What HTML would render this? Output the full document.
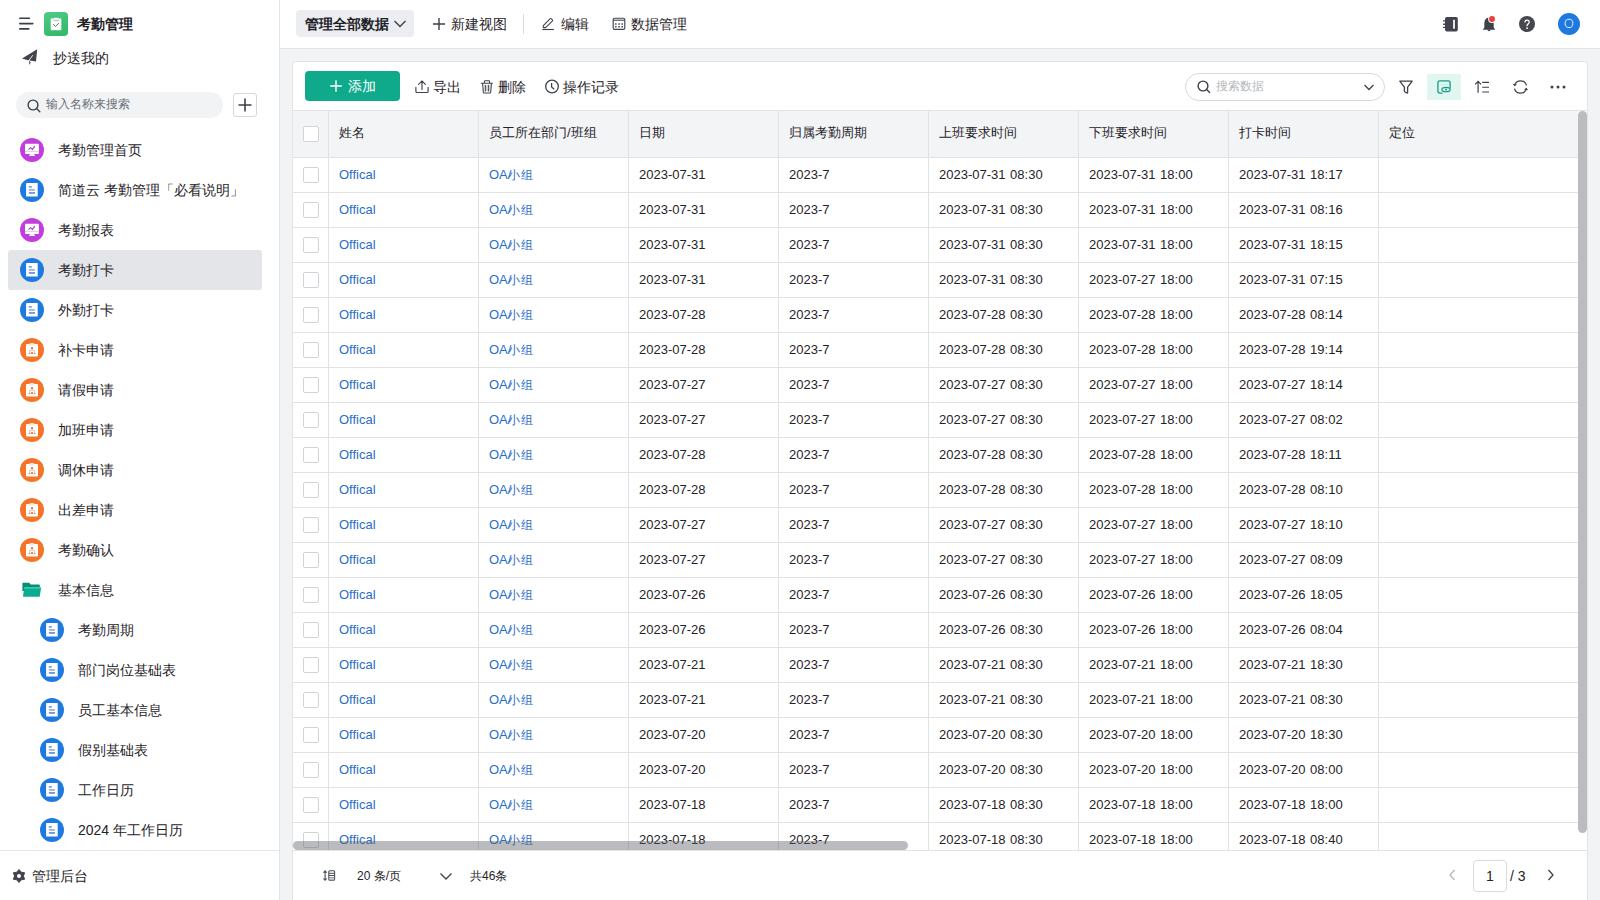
<!DOCTYPE html>
<html><head><meta charset="utf-8">
<style>
html,body{margin:0;padding:0}
body{width:1600px;height:900px;overflow:hidden;position:relative;background:#f2f3f5;font-family:"Liberation Sans",sans-serif;color:#1f2329;font-size:14px}
.a{position:absolute}
svg{display:block}
#side{position:absolute;left:0;top:0;width:279px;height:900px;background:#fff;border-right:1px solid #e3e4e6}
.t14{position:absolute;font-size:14px;line-height:20px;white-space:nowrap;color:#1f2329}
.nv{position:absolute;left:0;width:279px;height:40px}
.nvi{position:absolute;top:8px}
.nvt{position:absolute;top:10px;font-size:14px;line-height:20px;white-space:nowrap;color:#1f2329}
#hdr{position:absolute;left:280px;top:0;width:1320px;height:48px;background:#fff;border-bottom:1px solid #e3e4e6}
#card{position:absolute;left:292px;top:61px;width:1294px;height:850px;background:#fff;border:1px solid #e3e4e6;border-radius:4px}
.th{position:absolute;top:123px;font-size:13px;line-height:20px;white-space:nowrap;color:#1f2329}
.vl{position:absolute;top:111px;width:1px;height:739px;background:#e1e2e4}
.tr{position:absolute;left:293px;width:1285px;height:35px}
.hl{position:absolute;left:0;bottom:0;width:1285px;height:1px;background:#e1e2e4}
.cb{position:absolute;left:10px;width:14px;height:14px;border:1px solid #d0d3d7;border-radius:2px;background:#fff}
.td{position:absolute;top:7px;font-size:13px;line-height:20px;white-space:nowrap;color:#1f2329;word-spacing:1px}
.lk{color:#2a6dc8}
</style></head>
<body>
<div id="side">
  <!-- hamburger -->
  <svg class="a" style="left:18px;top:16px" width="16" height="16" viewBox="0 0 16 16"><path d="M1.8 2.3h9.6M1.8 7.6h13M1.8 12.9h9" stroke="#3b3f46" stroke-width="1.6" stroke-linecap="round"/></svg>
  <!-- app icon -->
  <div class="a" style="left:44px;top:12px;width:24px;height:24px;border-radius:4px;background:linear-gradient(160deg,#52c987,#2db866)"></div>
  <svg class="a" style="left:44px;top:12px" width="24" height="24" viewBox="0 0 24 24"><path d="M6.7 6.6h2.6v1.2q0 .8.8.8h3.8q.8 0 .8-.8V6.6h2.6v11.6H6.7z" fill="#fff"/><rect x="9.4" y="5.8" width="5.4" height="2.4" rx=".6" fill="#fff"/><path d="M9.6 8.3h5" stroke="#8fbfa2" stroke-width=".7"/><path d="M9.2 12.2l2.3 2.3 3.4-3.4" fill="none" stroke="#557a66" stroke-width="1"/></svg>
  <div class="t14" style="left:77px;top:14px;font-weight:bold">考勤管理</div>
  <!-- plane -->
  <svg class="a" style="left:16px;top:44px" width="28" height="26" viewBox="0 0 28 26"><path d="M21.2 5.2L6 14.4l5.2 1.5 2.2.7 6.6.9z" fill="#41444c"/><path d="M16.8 11.2l-4.6 6.2" stroke="#fff" stroke-width=".9"/><path d="M13.1 16.9l1.7 1.4-1.5 2.6z" fill="#41444c"/></svg>
  <div class="t14" style="left:53px;top:48px">抄送我的</div>
  <!-- search -->
  <div class="a" style="left:16px;top:92px;width:207px;height:26px;border-radius:13px;background:#f2f3f5"></div>
  <svg class="a" style="left:27px;top:99px" width="14" height="14" viewBox="0 0 14 14"><circle cx="6" cy="6" r="4.9" fill="none" stroke="#3d4148" stroke-width="1.4"/><path d="M9.6 9.6l3.2 3.2" stroke="#3d4148" stroke-width="1.4" stroke-linecap="round"/></svg>
  <div class="a" style="left:46px;top:96px;font-size:12px;line-height:17px;color:#6a6f77;white-space:nowrap">输入名称来搜索</div>
  <div class="a" style="left:233px;top:93px;width:22px;height:22px;border:1px solid #d5d7da;border-radius:3px;background:#fff"></div>
  <svg class="a" style="left:233px;top:93px" width="24" height="24" viewBox="0 0 24 24"><path d="M12 5.5v13M5.5 12h13" stroke="#3d4148" stroke-width="1.6"/></svg>
  <!-- selected -->
  <div class="a" style="left:8px;top:250px;width:254px;height:40px;border-radius:3px;background:#e3e5e8"></div>
<div class="nv" style="top:130px"><span class="nvi" style="left:20px"><svg class="ic" width="24" height="24" viewBox="0 0 24 24"><circle cx="12" cy="12" r="12" fill="#c13ddc"/><rect x="5" y="5.8" width="13.9" height="10.1" rx=".7" fill="#fff"/><rect x="5" y="12.9" width="13.9" height=".7" fill="#dcaee8"/><path d="M10.4 15.8h3.3v.8h1.1v1.3H9.3v-1.3h1.1z" fill="#fff"/><path d="M8.6 11.7l1.9-2 1.9 1.7 2.1-2.4" fill="none" stroke="#9c48b5" stroke-width="1.1"/><path d="M13.2 8.2l1.8-.5-.4 1.8z" fill="#9c48b5"/></svg></span><span class="nvt" style="left:58px">考勤管理首页</span></div>
<div class="nv" style="top:170px"><span class="nvi" style="left:20px"><svg class="ic" width="24" height="24" viewBox="0 0 24 24"><circle cx="12" cy="12" r="12" fill="#1f7ae0"/><rect x="6.1" y="5.1" width="11.6" height="13.5" rx=".5" fill="#fff"/><rect x="8.8" y="8.1" width="3" height="1.6" fill="#6e98dc"/><rect x="8.8" y="11.2" width="6" height="1.5" fill="#95a2b8"/><rect x="8.8" y="14.2" width="6.2" height="1.5" fill="#4f82d6"/></svg></span><span class="nvt" style="left:58px">简道云 考勤管理「必看说明」</span></div>
<div class="nv" style="top:210px"><span class="nvi" style="left:20px"><svg class="ic" width="24" height="24" viewBox="0 0 24 24"><circle cx="12" cy="12" r="12" fill="#c13ddc"/><rect x="5" y="5.8" width="13.9" height="10.1" rx=".7" fill="#fff"/><rect x="5" y="12.9" width="13.9" height=".7" fill="#dcaee8"/><path d="M10.4 15.8h3.3v.8h1.1v1.3H9.3v-1.3h1.1z" fill="#fff"/><path d="M8.6 11.7l1.9-2 1.9 1.7 2.1-2.4" fill="none" stroke="#9c48b5" stroke-width="1.1"/><path d="M13.2 8.2l1.8-.5-.4 1.8z" fill="#9c48b5"/></svg></span><span class="nvt" style="left:58px">考勤报表</span></div>
<div class="nv" style="top:250px"><span class="nvi" style="left:20px"><svg class="ic" width="24" height="24" viewBox="0 0 24 24"><circle cx="12" cy="12" r="12" fill="#1f7ae0"/><rect x="6.1" y="5.1" width="11.6" height="13.5" rx=".5" fill="#fff"/><rect x="8.8" y="8.1" width="3" height="1.6" fill="#6e98dc"/><rect x="8.8" y="11.2" width="6" height="1.5" fill="#95a2b8"/><rect x="8.8" y="14.2" width="6.2" height="1.5" fill="#4f82d6"/></svg></span><span class="nvt" style="left:58px">考勤打卡</span></div>
<div class="nv" style="top:290px"><span class="nvi" style="left:20px"><svg class="ic" width="24" height="24" viewBox="0 0 24 24"><circle cx="12" cy="12" r="12" fill="#1f7ae0"/><rect x="6.1" y="5.1" width="11.6" height="13.5" rx=".5" fill="#fff"/><rect x="8.8" y="8.1" width="3" height="1.6" fill="#6e98dc"/><rect x="8.8" y="11.2" width="6" height="1.5" fill="#95a2b8"/><rect x="8.8" y="14.2" width="6.2" height="1.5" fill="#4f82d6"/></svg></span><span class="nvt" style="left:58px">外勤打卡</span></div>
<div class="nv" style="top:330px"><span class="nvi" style="left:20px"><svg class="ic" width="24" height="24" viewBox="0 0 24 24"><circle cx="12" cy="12" r="12" fill="#f4752a"/><rect x="6" y="5.9" width="12" height="12.6" rx=".8" fill="#fff"/><rect x="9.6" y="5" width="4.7" height="2.2" rx="1" fill="#fde0c2"/><rect x="11.1" y="9.4" width="1.9" height="1.5" fill="#9e5a3a"/><path d="M9.5 14.2v-1.8h5.2v1.8M12 10.9v1.5" fill="none" stroke="#e3a27d" stroke-width=".6"/><path d="M8.4 15.9l1-1.7 1 1.7zM11.1 14.3h1.9v1.6h-1.9zM13.8 15.9l1-1.7 1 1.7z" fill="#e07038"/></svg></span><span class="nvt" style="left:58px">补卡申请</span></div>
<div class="nv" style="top:370px"><span class="nvi" style="left:20px"><svg class="ic" width="24" height="24" viewBox="0 0 24 24"><circle cx="12" cy="12" r="12" fill="#f4752a"/><rect x="6" y="5.9" width="12" height="12.6" rx=".8" fill="#fff"/><rect x="9.6" y="5" width="4.7" height="2.2" rx="1" fill="#fde0c2"/><rect x="11.1" y="9.4" width="1.9" height="1.5" fill="#9e5a3a"/><path d="M9.5 14.2v-1.8h5.2v1.8M12 10.9v1.5" fill="none" stroke="#e3a27d" stroke-width=".6"/><path d="M8.4 15.9l1-1.7 1 1.7zM11.1 14.3h1.9v1.6h-1.9zM13.8 15.9l1-1.7 1 1.7z" fill="#e07038"/></svg></span><span class="nvt" style="left:58px">请假申请</span></div>
<div class="nv" style="top:410px"><span class="nvi" style="left:20px"><svg class="ic" width="24" height="24" viewBox="0 0 24 24"><circle cx="12" cy="12" r="12" fill="#f4752a"/><rect x="6" y="5.9" width="12" height="12.6" rx=".8" fill="#fff"/><rect x="9.6" y="5" width="4.7" height="2.2" rx="1" fill="#fde0c2"/><rect x="11.1" y="9.4" width="1.9" height="1.5" fill="#9e5a3a"/><path d="M9.5 14.2v-1.8h5.2v1.8M12 10.9v1.5" fill="none" stroke="#e3a27d" stroke-width=".6"/><path d="M8.4 15.9l1-1.7 1 1.7zM11.1 14.3h1.9v1.6h-1.9zM13.8 15.9l1-1.7 1 1.7z" fill="#e07038"/></svg></span><span class="nvt" style="left:58px">加班申请</span></div>
<div class="nv" style="top:450px"><span class="nvi" style="left:20px"><svg class="ic" width="24" height="24" viewBox="0 0 24 24"><circle cx="12" cy="12" r="12" fill="#f4752a"/><rect x="6" y="5.9" width="12" height="12.6" rx=".8" fill="#fff"/><rect x="9.6" y="5" width="4.7" height="2.2" rx="1" fill="#fde0c2"/><rect x="11.1" y="9.4" width="1.9" height="1.5" fill="#9e5a3a"/><path d="M9.5 14.2v-1.8h5.2v1.8M12 10.9v1.5" fill="none" stroke="#e3a27d" stroke-width=".6"/><path d="M8.4 15.9l1-1.7 1 1.7zM11.1 14.3h1.9v1.6h-1.9zM13.8 15.9l1-1.7 1 1.7z" fill="#e07038"/></svg></span><span class="nvt" style="left:58px">调休申请</span></div>
<div class="nv" style="top:490px"><span class="nvi" style="left:20px"><svg class="ic" width="24" height="24" viewBox="0 0 24 24"><circle cx="12" cy="12" r="12" fill="#f4752a"/><rect x="6" y="5.9" width="12" height="12.6" rx=".8" fill="#fff"/><rect x="9.6" y="5" width="4.7" height="2.2" rx="1" fill="#fde0c2"/><rect x="11.1" y="9.4" width="1.9" height="1.5" fill="#9e5a3a"/><path d="M9.5 14.2v-1.8h5.2v1.8M12 10.9v1.5" fill="none" stroke="#e3a27d" stroke-width=".6"/><path d="M8.4 15.9l1-1.7 1 1.7zM11.1 14.3h1.9v1.6h-1.9zM13.8 15.9l1-1.7 1 1.7z" fill="#e07038"/></svg></span><span class="nvt" style="left:58px">出差申请</span></div>
<div class="nv" style="top:530px"><span class="nvi" style="left:20px"><svg class="ic" width="24" height="24" viewBox="0 0 24 24"><circle cx="12" cy="12" r="12" fill="#f4752a"/><rect x="6" y="5.9" width="12" height="12.6" rx=".8" fill="#fff"/><rect x="9.6" y="5" width="4.7" height="2.2" rx="1" fill="#fde0c2"/><rect x="11.1" y="9.4" width="1.9" height="1.5" fill="#9e5a3a"/><path d="M9.5 14.2v-1.8h5.2v1.8M12 10.9v1.5" fill="none" stroke="#e3a27d" stroke-width=".6"/><path d="M8.4 15.9l1-1.7 1 1.7zM11.1 14.3h1.9v1.6h-1.9zM13.8 15.9l1-1.7 1 1.7z" fill="#e07038"/></svg></span><span class="nvt" style="left:58px">考勤确认</span></div>
<div class="nv" style="top:570px"><span class="nvi" style="left:20px"><svg class="ic" width="24" height="24" viewBox="0 0 24 24"><path d="M2.4 5.3Q2.4 4.7 3 4.7H9.3L10.7 6.4H19.2Q19.8 6.4 19.8 7V13H2.4z" fill="#0a8c76"/><path d="M4.3 9.3H20.5Q21.2 9.3 21.1 10L19.8 18.2Q19.7 18.8 19.1 18.8H3.6Q3 18.8 3 18.2z" fill="#0aab8f"/><path d="M4.3 9.3H20.5Q21.2 9.3 21.1 10L21 10.6H4.1z" fill="#45dcc2"/></svg></span><span class="nvt" style="left:58px">基本信息</span></div>
<div class="nv" style="top:610px"><span class="nvi" style="left:40px"><svg class="ic" width="24" height="24" viewBox="0 0 24 24"><circle cx="12" cy="12" r="12" fill="#1f7ae0"/><rect x="6.1" y="5.1" width="11.6" height="13.5" rx=".5" fill="#fff"/><rect x="8.8" y="8.1" width="3" height="1.6" fill="#6e98dc"/><rect x="8.8" y="11.2" width="6" height="1.5" fill="#95a2b8"/><rect x="8.8" y="14.2" width="6.2" height="1.5" fill="#4f82d6"/></svg></span><span class="nvt" style="left:78px">考勤周期</span></div>
<div class="nv" style="top:650px"><span class="nvi" style="left:40px"><svg class="ic" width="24" height="24" viewBox="0 0 24 24"><circle cx="12" cy="12" r="12" fill="#1f7ae0"/><rect x="6.1" y="5.1" width="11.6" height="13.5" rx=".5" fill="#fff"/><rect x="8.8" y="8.1" width="3" height="1.6" fill="#6e98dc"/><rect x="8.8" y="11.2" width="6" height="1.5" fill="#95a2b8"/><rect x="8.8" y="14.2" width="6.2" height="1.5" fill="#4f82d6"/></svg></span><span class="nvt" style="left:78px">部门岗位基础表</span></div>
<div class="nv" style="top:690px"><span class="nvi" style="left:40px"><svg class="ic" width="24" height="24" viewBox="0 0 24 24"><circle cx="12" cy="12" r="12" fill="#1f7ae0"/><rect x="6.1" y="5.1" width="11.6" height="13.5" rx=".5" fill="#fff"/><rect x="8.8" y="8.1" width="3" height="1.6" fill="#6e98dc"/><rect x="8.8" y="11.2" width="6" height="1.5" fill="#95a2b8"/><rect x="8.8" y="14.2" width="6.2" height="1.5" fill="#4f82d6"/></svg></span><span class="nvt" style="left:78px">员工基本信息</span></div>
<div class="nv" style="top:730px"><span class="nvi" style="left:40px"><svg class="ic" width="24" height="24" viewBox="0 0 24 24"><circle cx="12" cy="12" r="12" fill="#1f7ae0"/><rect x="6.1" y="5.1" width="11.6" height="13.5" rx=".5" fill="#fff"/><rect x="8.8" y="8.1" width="3" height="1.6" fill="#6e98dc"/><rect x="8.8" y="11.2" width="6" height="1.5" fill="#95a2b8"/><rect x="8.8" y="14.2" width="6.2" height="1.5" fill="#4f82d6"/></svg></span><span class="nvt" style="left:78px">假别基础表</span></div>
<div class="nv" style="top:770px"><span class="nvi" style="left:40px"><svg class="ic" width="24" height="24" viewBox="0 0 24 24"><circle cx="12" cy="12" r="12" fill="#1f7ae0"/><rect x="6.1" y="5.1" width="11.6" height="13.5" rx=".5" fill="#fff"/><rect x="8.8" y="8.1" width="3" height="1.6" fill="#6e98dc"/><rect x="8.8" y="11.2" width="6" height="1.5" fill="#95a2b8"/><rect x="8.8" y="14.2" width="6.2" height="1.5" fill="#4f82d6"/></svg></span><span class="nvt" style="left:78px">工作日历</span></div>
<div class="nv" style="top:810px"><span class="nvi" style="left:40px"><svg class="ic" width="24" height="24" viewBox="0 0 24 24"><circle cx="12" cy="12" r="12" fill="#1f7ae0"/><rect x="6.1" y="5.1" width="11.6" height="13.5" rx=".5" fill="#fff"/><rect x="8.8" y="8.1" width="3" height="1.6" fill="#6e98dc"/><rect x="8.8" y="11.2" width="6" height="1.5" fill="#95a2b8"/><rect x="8.8" y="14.2" width="6.2" height="1.5" fill="#4f82d6"/></svg></span><span class="nvt" style="left:78px">2024 年工作日历</span></div>
  <!-- footer -->
  <div class="a" style="left:0;top:850px;width:279px;height:1px;background:#e6e7e9"></div>
  <svg class="a" style="left:11px;top:868px" width="16" height="16" viewBox="0 0 16 16"><path d="M8.00 1.50 L10.20 4.19 L13.63 4.75 L12.40 8.00 L13.63 11.25 L10.20 11.81 L8.00 14.50 L5.80 11.81 L2.37 11.25 L3.60 8.00 L2.37 4.75 L5.80 4.19Z" fill="#41444c" stroke="#41444c" stroke-width="1" stroke-linejoin="round"/><circle cx="8" cy="8" r="2" fill="#fff"/></svg>
  <div class="t14" style="left:32px;top:866px">管理后台</div>
</div>

<div id="hdr">
  <div class="a" style="left:16px;top:10px;width:118px;height:27px;border-radius:4px;background:#ebedf0"></div>
  <div class="t14" style="left:25px;top:14px;font-weight:bold">管理全部数据</div>
  <svg class="a" style="left:113px;top:18px" width="14" height="12" viewBox="0 0 14 12"><path d="M1.5 3l5.5 5.5L12.5 3" fill="none" stroke="#3d4148" stroke-width="1.4"/></svg>
  <svg class="a" style="left:152px;top:17px" width="14" height="14" viewBox="0 0 14 14"><path d="M7 1v12M1 7h12" stroke="#3d4148" stroke-width="1.4"/></svg>
  <div class="t14" style="left:171px;top:14px">新建视图</div>
  <div class="a" style="left:243px;top:14px;width:1px;height:20px;background:#dcdee1"></div>
  <svg class="a" style="left:261px;top:17px" width="14" height="14" viewBox="0 0 14 14"><path d="M1.3 12.5h11.6" stroke="#41444c" stroke-width="1.15"/><path d="M2.3 10.6V8.6L9 1.9Q9.7 1.2 10.4 1.9L11.3 2.8Q12 3.5 11.3 4.2L4.6 10.6z" fill="none" stroke="#41444c" stroke-width="1.1" stroke-linejoin="round"/></svg>
  <div class="t14" style="left:281px;top:14px">编辑</div>
  <svg class="a" style="left:332px;top:17px" width="14" height="14" viewBox="0 0 14 14"><rect x="1.2" y="1.2" width="11.6" height="11.2" rx="1.4" fill="none" stroke="#41444c" stroke-width="1.15"/><path d="M1.4 3.2h11.2" stroke="#41444c" stroke-width="1.1"/><path d="M3.1 6.3h1.5v1.5H3.1zM6.35 6.3h1.5v1.5H6.35zM9.4 6.3h1.5v1.5H9.4zM3.1 9h1.5v1.5H3.1zM6.35 9h1.5v1.5H6.35zM9.4 9h1.5v1.5H9.4z" fill="#41444c"/></svg>
  <div class="t14" style="left:351px;top:14px">数据管理</div>
  <!-- right icons -->
  <svg class="a" style="left:1161px;top:16px" width="18" height="16" viewBox="0 0 18 16"><rect x="4" y="1" width="12.8" height="14.5" rx="1.8" fill="#41444c"/><path d="M2.6 4.9h2M2.6 8.2h2M2.6 11.4h2" stroke="#41444c" stroke-width="1.4" stroke-linecap="round"/><rect x="12" y="3.8" width="2" height="8.9" fill="#e4e5e8"/></svg>
  <svg class="a" style="left:1201px;top:14px" width="18" height="19" viewBox="0 0 18 19"><path d="M8 3.4Q12.6 3.8 12.7 9.4V13.4L14.2 15.8H1.8L3.3 13.4V9.4Q3.4 3.8 8 3.4z" fill="#3d4148"/><path d="M6.1 15.6Q8 19 9.9 15.6z" fill="#3d4148"/><circle cx="11" cy="5" r="3.9" fill="#fff"/><circle cx="11" cy="5" r="2.95" fill="#ea3f3f"/></svg>
  <svg class="a" style="left:1239px;top:16px" width="16" height="16" viewBox="0 0 16 16"><circle cx="8" cy="8" r="8" fill="#45484f"/><path d="M5.9 6.4Q5.9 4.2 8.1 4.2Q10.2 4.2 10.2 6.1Q10.2 7.2 9.2 7.9Q8.1 8.6 8.1 9.6V10.2" fill="none" stroke="#fff" stroke-width="1.25"/><circle cx="8.1" cy="12.2" r=".85" fill="#fff"/></svg>
  <div class="a" style="left:1278px;top:13px;width:22px;height:22px;border-radius:11px;background:#1f7ae0"></div>
  <svg class="a" style="left:1278px;top:13px" width="22" height="22" viewBox="0 0 22 22"><ellipse cx="11" cy="10.4" rx="3.85" ry="4.2" fill="none" stroke="#fff" stroke-width=".9"/></svg>
</div>

<div id="card"></div>
<!-- toolbar -->
<div class="a" style="left:305px;top:71px;width:95px;height:30px;border-radius:4px;background:#0fa98c"></div>
<svg class="a" style="left:329px;top:79px" width="14" height="14" viewBox="0 0 14 14"><path d="M7 1.2v11.6M1.2 7h11.6" stroke="#fff" stroke-width="1.4"/></svg>
<div class="t14" style="left:348px;top:76px;color:#fff">添加</div>
<svg class="a" style="left:414px;top:79px" width="16" height="16" viewBox="0 0 16 16"><path d="M1.9 8.4V12.5Q1.9 13.5 2.9 13.5H13.1Q14.1 13.5 14.1 12.5V8.4M8 10.6V1.9M4.6 5.3L8 1.9l3.4 3.4" fill="none" stroke="#41444c" stroke-width="1.15" stroke-linecap="round" stroke-linejoin="round"/></svg>
<div class="t14" style="left:433px;top:77px">导出</div>
<svg class="a" style="left:480px;top:79px" width="14" height="15" viewBox="0 0 14 15"><rect x="5.3" y="6.2" width="3.4" height="6" fill="#cfd1d6"/><path d="M1.4 4.3H12.4M4.4 4.3V2.6Q4.4 1.8 5.2 1.8H8.8Q9.6 1.8 9.6 2.6V4.3M2.6 4.3L3.3 13.2Q3.4 14 4.2 14H9.8Q10.6 14 10.7 13.2L11.4 4.3M5.3 6.3V12M8.7 6.3V12" fill="none" stroke="#41444c" stroke-width="1.1" stroke-linecap="round" stroke-linejoin="round"/></svg>
<div class="t14" style="left:498px;top:77px">删除</div>
<svg class="a" style="left:544px;top:79px" width="16" height="15" viewBox="0 0 16 15"><circle cx="8" cy="7.5" r="6.3" fill="none" stroke="#3d4148" stroke-width="1.3"/><path d="M7.6 4v4l2.6 2.2" fill="none" stroke="#3d4148" stroke-width="1.3"/></svg>
<div class="t14" style="left:563px;top:77px">操作记录</div>
<!-- right toolbar -->
<div class="a" style="left:1185px;top:73px;width:198px;height:26px;border:1px solid #d7d9dc;border-radius:14px;background:#fff"></div>
<svg class="a" style="left:1197px;top:80px" width="14" height="14" viewBox="0 0 14 14"><circle cx="6" cy="6" r="4.9" fill="none" stroke="#3d4148" stroke-width="1.4"/><path d="M9.6 9.6l3 3" stroke="#3d4148" stroke-width="1.4" stroke-linecap="round"/></svg>
<div class="a" style="left:1216px;top:78px;font-size:12px;line-height:17px;color:#b6b9be;white-space:nowrap">搜索数据</div>
<svg class="a" style="left:1362px;top:81px" width="14" height="12" viewBox="0 0 14 12"><path d="M2.5 4l4.5 4.5L11.5 4" fill="none" stroke="#3d4148" stroke-width="1.3"/></svg>
<svg class="a" style="left:1398px;top:79px" width="16" height="16" viewBox="0 0 16 16"><path d="M1.8 2.2h12.4L9.6 8.2v5.2q0 .8-.8.5L7 13q-.6-.3-.6-.9V8.2z" fill="none" stroke="#3d4148" stroke-width="1.3" stroke-linejoin="round"/></svg>
<div class="a" style="left:1427px;top:74px;width:34px;height:26px;border-radius:1px;background:#e2f6f1"></div>
<svg class="a" style="left:1436px;top:79px" width="16" height="16" viewBox="0 0 16 16"><path d="M6.5 14.1H3.9Q1.9 14.1 1.9 12.1V3.9Q1.9 1.9 3.9 1.9H12.1Q14.1 1.9 14.1 3.9V9.3" fill="none" stroke="#139f86" stroke-width="1.3"/><path d="M4.5 5.4h7" stroke="#c9ebe3" stroke-width="1"/><ellipse cx="10" cy="10.5" rx="4.1" ry="2.2" fill="#e8f8f4" stroke="#139f86" stroke-width="1.3"/><circle cx="10" cy="10.4" r="1" fill="#139f86"/></svg>
<svg class="a" style="left:1474px;top:80px" width="17" height="14" viewBox="0 0 17 14"><path d="M4.1 12.8V1.4M1.1 4.4l3-3 3 3M8.2 2.4h6.8M8.2 7.25h6.8M8.2 12h6.8" fill="none" stroke="#3d4148" stroke-width="1.2"/></svg>
<svg class="a" style="left:1512px;top:79px" width="17" height="16" viewBox="0 0 17 16"><path d="M14.5 6.3Q13.4 1.8 8.5 1.8 3.9 1.8 2.6 6.2M2.5 9.7q1.1 4.5 6 4.5 4.6 0 5.9-4.4" fill="none" stroke="#3d4148" stroke-width="1.25"/><path d="M0.8 4.8l1.8 2.4 2.4-1.6zM16.2 11.2l-1.8-2.4-2.4 1.6z" fill="#3d4148"/></svg>
<svg class="a" style="left:1549px;top:84px" width="18" height="6" viewBox="0 0 18 6"><circle cx="3" cy="3" r="1.5" fill="#3d4148"/><circle cx="9" cy="3" r="1.5" fill="#3d4148"/><circle cx="15" cy="3" r="1.5" fill="#3d4148"/></svg>

<!-- table -->
<div class="a" style="left:293px;top:110px;width:1294px;height:1px;background:#e1e2e4"></div>
<div class="a" style="left:293px;top:111px;width:1285px;height:46px;background:#f3f4f6"></div>
<div class="a" style="left:293px;top:157px;width:1285px;height:1px;background:#e1e2e4"></div>
<div class="a" style="left:303px;top:126px;width:14px;height:14px;border:1px solid #d0d3d7;border-radius:2px;background:#fff"></div>
<div class="a" style="left:293px;top:111px;width:1285px;height:739px;overflow:hidden">
  <div class="a" style="left:-293px;top:-111px;width:1600px;height:900px">
<div class="th" style="left:339px">姓名</div>
<div class="th" style="left:489px">员工所在部门/班组</div>
<div class="th" style="left:639px">日期</div>
<div class="th" style="left:789px">归属考勤周期</div>
<div class="th" style="left:939px">上班要求时间</div>
<div class="th" style="left:1089px">下班要求时间</div>
<div class="th" style="left:1239px">打卡时间</div>
<div class="th" style="left:1389px">定位</div>
<div class="vl" style="left:328px"></div><div class="vl" style="left:478px"></div><div class="vl" style="left:628px"></div><div class="vl" style="left:778px"></div><div class="vl" style="left:928px"></div><div class="vl" style="left:1078px"></div><div class="vl" style="left:1228px"></div><div class="vl" style="left:1378px"></div>
<div class="tr" style="top:158px"><span class="cb" style="top:9px"></span><span class="td lk" style="left:46px">Offical</span><span class="td lk" style="left:196px">OA/<span style="font-size:12px;margin-left:-3.5px;letter-spacing:0.8px;position:relative;top:-0.5px">小组</span></span><span class="td " style="left:346px">2023-07-31</span><span class="td " style="left:496px">2023-7</span><span class="td " style="left:646px">2023-07-31 08:30</span><span class="td " style="left:796px">2023-07-31 18:00</span><span class="td " style="left:946px">2023-07-31 18:17</span><span class="hl"></span></div>
<div class="tr" style="top:193px"><span class="cb" style="top:9px"></span><span class="td lk" style="left:46px">Offical</span><span class="td lk" style="left:196px">OA/<span style="font-size:12px;margin-left:-3.5px;letter-spacing:0.8px;position:relative;top:-0.5px">小组</span></span><span class="td " style="left:346px">2023-07-31</span><span class="td " style="left:496px">2023-7</span><span class="td " style="left:646px">2023-07-31 08:30</span><span class="td " style="left:796px">2023-07-31 18:00</span><span class="td " style="left:946px">2023-07-31 08:16</span><span class="hl"></span></div>
<div class="tr" style="top:228px"><span class="cb" style="top:9px"></span><span class="td lk" style="left:46px">Offical</span><span class="td lk" style="left:196px">OA/<span style="font-size:12px;margin-left:-3.5px;letter-spacing:0.8px;position:relative;top:-0.5px">小组</span></span><span class="td " style="left:346px">2023-07-31</span><span class="td " style="left:496px">2023-7</span><span class="td " style="left:646px">2023-07-31 08:30</span><span class="td " style="left:796px">2023-07-31 18:00</span><span class="td " style="left:946px">2023-07-31 18:15</span><span class="hl"></span></div>
<div class="tr" style="top:263px"><span class="cb" style="top:9px"></span><span class="td lk" style="left:46px">Offical</span><span class="td lk" style="left:196px">OA/<span style="font-size:12px;margin-left:-3.5px;letter-spacing:0.8px;position:relative;top:-0.5px">小组</span></span><span class="td " style="left:346px">2023-07-31</span><span class="td " style="left:496px">2023-7</span><span class="td " style="left:646px">2023-07-31 08:30</span><span class="td " style="left:796px">2023-07-27 18:00</span><span class="td " style="left:946px">2023-07-31 07:15</span><span class="hl"></span></div>
<div class="tr" style="top:298px"><span class="cb" style="top:9px"></span><span class="td lk" style="left:46px">Offical</span><span class="td lk" style="left:196px">OA/<span style="font-size:12px;margin-left:-3.5px;letter-spacing:0.8px;position:relative;top:-0.5px">小组</span></span><span class="td " style="left:346px">2023-07-28</span><span class="td " style="left:496px">2023-7</span><span class="td " style="left:646px">2023-07-28 08:30</span><span class="td " style="left:796px">2023-07-28 18:00</span><span class="td " style="left:946px">2023-07-28 08:14</span><span class="hl"></span></div>
<div class="tr" style="top:333px"><span class="cb" style="top:9px"></span><span class="td lk" style="left:46px">Offical</span><span class="td lk" style="left:196px">OA/<span style="font-size:12px;margin-left:-3.5px;letter-spacing:0.8px;position:relative;top:-0.5px">小组</span></span><span class="td " style="left:346px">2023-07-28</span><span class="td " style="left:496px">2023-7</span><span class="td " style="left:646px">2023-07-28 08:30</span><span class="td " style="left:796px">2023-07-28 18:00</span><span class="td " style="left:946px">2023-07-28 19:14</span><span class="hl"></span></div>
<div class="tr" style="top:368px"><span class="cb" style="top:9px"></span><span class="td lk" style="left:46px">Offical</span><span class="td lk" style="left:196px">OA/<span style="font-size:12px;margin-left:-3.5px;letter-spacing:0.8px;position:relative;top:-0.5px">小组</span></span><span class="td " style="left:346px">2023-07-27</span><span class="td " style="left:496px">2023-7</span><span class="td " style="left:646px">2023-07-27 08:30</span><span class="td " style="left:796px">2023-07-27 18:00</span><span class="td " style="left:946px">2023-07-27 18:14</span><span class="hl"></span></div>
<div class="tr" style="top:403px"><span class="cb" style="top:9px"></span><span class="td lk" style="left:46px">Offical</span><span class="td lk" style="left:196px">OA/<span style="font-size:12px;margin-left:-3.5px;letter-spacing:0.8px;position:relative;top:-0.5px">小组</span></span><span class="td " style="left:346px">2023-07-27</span><span class="td " style="left:496px">2023-7</span><span class="td " style="left:646px">2023-07-27 08:30</span><span class="td " style="left:796px">2023-07-27 18:00</span><span class="td " style="left:946px">2023-07-27 08:02</span><span class="hl"></span></div>
<div class="tr" style="top:438px"><span class="cb" style="top:9px"></span><span class="td lk" style="left:46px">Offical</span><span class="td lk" style="left:196px">OA/<span style="font-size:12px;margin-left:-3.5px;letter-spacing:0.8px;position:relative;top:-0.5px">小组</span></span><span class="td " style="left:346px">2023-07-28</span><span class="td " style="left:496px">2023-7</span><span class="td " style="left:646px">2023-07-28 08:30</span><span class="td " style="left:796px">2023-07-28 18:00</span><span class="td " style="left:946px">2023-07-28 18:11</span><span class="hl"></span></div>
<div class="tr" style="top:473px"><span class="cb" style="top:9px"></span><span class="td lk" style="left:46px">Offical</span><span class="td lk" style="left:196px">OA/<span style="font-size:12px;margin-left:-3.5px;letter-spacing:0.8px;position:relative;top:-0.5px">小组</span></span><span class="td " style="left:346px">2023-07-28</span><span class="td " style="left:496px">2023-7</span><span class="td " style="left:646px">2023-07-28 08:30</span><span class="td " style="left:796px">2023-07-28 18:00</span><span class="td " style="left:946px">2023-07-28 08:10</span><span class="hl"></span></div>
<div class="tr" style="top:508px"><span class="cb" style="top:9px"></span><span class="td lk" style="left:46px">Offical</span><span class="td lk" style="left:196px">OA/<span style="font-size:12px;margin-left:-3.5px;letter-spacing:0.8px;position:relative;top:-0.5px">小组</span></span><span class="td " style="left:346px">2023-07-27</span><span class="td " style="left:496px">2023-7</span><span class="td " style="left:646px">2023-07-27 08:30</span><span class="td " style="left:796px">2023-07-27 18:00</span><span class="td " style="left:946px">2023-07-27 18:10</span><span class="hl"></span></div>
<div class="tr" style="top:543px"><span class="cb" style="top:9px"></span><span class="td lk" style="left:46px">Offical</span><span class="td lk" style="left:196px">OA/<span style="font-size:12px;margin-left:-3.5px;letter-spacing:0.8px;position:relative;top:-0.5px">小组</span></span><span class="td " style="left:346px">2023-07-27</span><span class="td " style="left:496px">2023-7</span><span class="td " style="left:646px">2023-07-27 08:30</span><span class="td " style="left:796px">2023-07-27 18:00</span><span class="td " style="left:946px">2023-07-27 08:09</span><span class="hl"></span></div>
<div class="tr" style="top:578px"><span class="cb" style="top:9px"></span><span class="td lk" style="left:46px">Offical</span><span class="td lk" style="left:196px">OA/<span style="font-size:12px;margin-left:-3.5px;letter-spacing:0.8px;position:relative;top:-0.5px">小组</span></span><span class="td " style="left:346px">2023-07-26</span><span class="td " style="left:496px">2023-7</span><span class="td " style="left:646px">2023-07-26 08:30</span><span class="td " style="left:796px">2023-07-26 18:00</span><span class="td " style="left:946px">2023-07-26 18:05</span><span class="hl"></span></div>
<div class="tr" style="top:613px"><span class="cb" style="top:9px"></span><span class="td lk" style="left:46px">Offical</span><span class="td lk" style="left:196px">OA/<span style="font-size:12px;margin-left:-3.5px;letter-spacing:0.8px;position:relative;top:-0.5px">小组</span></span><span class="td " style="left:346px">2023-07-26</span><span class="td " style="left:496px">2023-7</span><span class="td " style="left:646px">2023-07-26 08:30</span><span class="td " style="left:796px">2023-07-26 18:00</span><span class="td " style="left:946px">2023-07-26 08:04</span><span class="hl"></span></div>
<div class="tr" style="top:648px"><span class="cb" style="top:9px"></span><span class="td lk" style="left:46px">Offical</span><span class="td lk" style="left:196px">OA/<span style="font-size:12px;margin-left:-3.5px;letter-spacing:0.8px;position:relative;top:-0.5px">小组</span></span><span class="td " style="left:346px">2023-07-21</span><span class="td " style="left:496px">2023-7</span><span class="td " style="left:646px">2023-07-21 08:30</span><span class="td " style="left:796px">2023-07-21 18:00</span><span class="td " style="left:946px">2023-07-21 18:30</span><span class="hl"></span></div>
<div class="tr" style="top:683px"><span class="cb" style="top:9px"></span><span class="td lk" style="left:46px">Offical</span><span class="td lk" style="left:196px">OA/<span style="font-size:12px;margin-left:-3.5px;letter-spacing:0.8px;position:relative;top:-0.5px">小组</span></span><span class="td " style="left:346px">2023-07-21</span><span class="td " style="left:496px">2023-7</span><span class="td " style="left:646px">2023-07-21 08:30</span><span class="td " style="left:796px">2023-07-21 18:00</span><span class="td " style="left:946px">2023-07-21 08:30</span><span class="hl"></span></div>
<div class="tr" style="top:718px"><span class="cb" style="top:9px"></span><span class="td lk" style="left:46px">Offical</span><span class="td lk" style="left:196px">OA/<span style="font-size:12px;margin-left:-3.5px;letter-spacing:0.8px;position:relative;top:-0.5px">小组</span></span><span class="td " style="left:346px">2023-07-20</span><span class="td " style="left:496px">2023-7</span><span class="td " style="left:646px">2023-07-20 08:30</span><span class="td " style="left:796px">2023-07-20 18:00</span><span class="td " style="left:946px">2023-07-20 18:30</span><span class="hl"></span></div>
<div class="tr" style="top:753px"><span class="cb" style="top:9px"></span><span class="td lk" style="left:46px">Offical</span><span class="td lk" style="left:196px">OA/<span style="font-size:12px;margin-left:-3.5px;letter-spacing:0.8px;position:relative;top:-0.5px">小组</span></span><span class="td " style="left:346px">2023-07-20</span><span class="td " style="left:496px">2023-7</span><span class="td " style="left:646px">2023-07-20 08:30</span><span class="td " style="left:796px">2023-07-20 18:00</span><span class="td " style="left:946px">2023-07-20 08:00</span><span class="hl"></span></div>
<div class="tr" style="top:788px"><span class="cb" style="top:9px"></span><span class="td lk" style="left:46px">Offical</span><span class="td lk" style="left:196px">OA/<span style="font-size:12px;margin-left:-3.5px;letter-spacing:0.8px;position:relative;top:-0.5px">小组</span></span><span class="td " style="left:346px">2023-07-18</span><span class="td " style="left:496px">2023-7</span><span class="td " style="left:646px">2023-07-18 08:30</span><span class="td " style="left:796px">2023-07-18 18:00</span><span class="td " style="left:946px">2023-07-18 18:00</span><span class="hl"></span></div>
<div class="tr" style="top:823px"><span class="cb" style="top:9px"></span><span class="td lk" style="left:46px">Offical</span><span class="td lk" style="left:196px">OA/<span style="font-size:12px;margin-left:-3.5px;letter-spacing:0.8px;position:relative;top:-0.5px">小组</span></span><span class="td " style="left:346px">2023-07-18</span><span class="td " style="left:496px">2023-7</span><span class="td " style="left:646px">2023-07-18 08:30</span><span class="td " style="left:796px">2023-07-18 18:00</span><span class="td " style="left:946px">2023-07-18 08:40</span><span class="hl"></span></div>
  </div>
</div>
<div class="a" style="left:293px;top:850px;width:1294px;height:1px;background:#e1e2e4"></div>
<!-- scrollbars -->
<div class="a" style="left:1578px;top:111px;width:9px;height:722px;border-radius:4.5px;background:#bbbcc0"></div>
<div class="a" style="left:293px;top:841px;width:615px;height:9px;border-radius:4.5px;background:rgba(95,98,105,.43)"></div>

<!-- footer -->
<svg class="a" style="left:321px;top:869px" width="16" height="14" viewBox="0 0 16 14"><path d="M4.1 2.6v8" stroke="#4a4d54" stroke-width="1.1"/><path d="M1.8 3.7L4.1 1 6.4 3.7zM1.8 9.4L4.1 12.1 6.4 9.4z" fill="#4a4d54"/><rect x="7.8" y="1.8" width="5.8" height="9.5" rx="1" fill="none" stroke="#4a4d54" stroke-width="1.1"/><path d="M8 4.3h5.4M8 6.5h5.4" stroke="#4a4d54" stroke-width="1"/><path d="M8 8.5h5.4M8 10h5.4" stroke="#9a9da3" stroke-width="1"/></svg>
<div class="a" style="left:357px;top:868px;font-size:12px;line-height:17px;white-space:nowrap;color:#1f2329">20 条/页</div>
<svg class="a" style="left:439px;top:871px" width="14" height="10" viewBox="0 0 14 10"><path d="M1.5 2.5l5.5 5.5 5.5-5.5" fill="none" stroke="#3d4148" stroke-width="1.3"/></svg>
<div class="a" style="left:470px;top:868px;font-size:12px;line-height:17px;white-space:nowrap;color:#1f2329">共46条</div>
<svg class="a" style="left:1447px;top:868px" width="10" height="14" viewBox="0 0 10 14"><path d="M7.5 2L3 7l4.5 5" fill="none" stroke="#b3b6bb" stroke-width="1.3"/></svg>
<div class="a" style="left:1473px;top:860px;width:32px;height:30px;border:1px solid #d9dbde;border-radius:4px;background:#fff;text-align:center;line-height:31px;font-size:14px;color:#1f2329">1</div>
<div class="a" style="left:1510px;top:866px;font-size:14px;line-height:20px;white-space:nowrap;color:#1f2329">/ 3</div>
<svg class="a" style="left:1546px;top:868px" width="10" height="14" viewBox="0 0 10 14"><path d="M2.5 2L7 7l-4.5 5" fill="none" stroke="#3d4148" stroke-width="1.3"/></svg>
</body></html>
